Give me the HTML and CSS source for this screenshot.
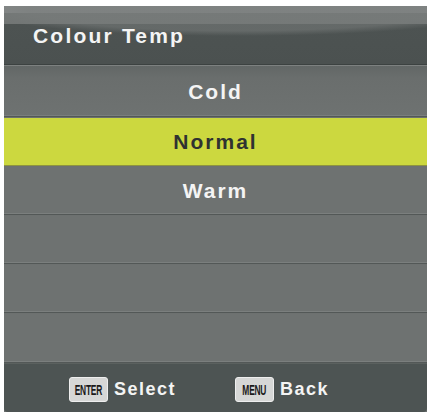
FILE: index.html
```html
<!DOCTYPE html>
<html>
<head>
<meta charset="utf-8">
<link rel="stylesheet" href="styles.css">
</head>
<body>
<div class="screen">
  <div class="header"><span class="title">Colour Temp</span></div>
  <div class="list">
    <div class="row first">Cold</div>
    <div class="row selected">Normal</div>
    <div class="row">Warm</div>
    <div class="row"></div>
    <div class="row"></div>
    <div class="row"></div>
  </div>
  <div class="footer">
    <div class="hint"><span class="key"><span class="keytext">ENTER</span></span><span class="label">Select</span></div>
    <div class="hint"><span class="key"><span class="keytext">MENU</span></span><span class="label">Back</span></div>
  </div>
</div>
</body>
</html>
```
FILE: styles.css
```css
html, body {
  margin: 0;
  padding: 0;
  background: #ffffff;
}
body {
  padding: 6px 4px 0 4px;
  font-family: "Liberation Sans", Arial, sans-serif;
}
.screen {
  width: 423px;
  display: flex;
  flex-direction: column;
  background: #6d7170;
}
.header {
  position: relative;
  height: 58px;
  display: flex;
  align-items: center;
  padding-left: 29px;
  background:
    radial-gradient(ellipse 260px 26px at 55% 4px, rgba(120,124,123,0.55) 0, rgba(120,124,123,0.55) 80%, rgba(120,124,123,0) 100%),
    linear-gradient(to bottom, #868989 0, #868989 7px, #727675 7px, #727675 18px, #4d5352 18px, #4b5150 100%);
  border-bottom: 1px solid #3c4241;
  box-shadow: 0 1px 0 #7d8180;
  margin-bottom: 1px;
}
.title {
  color: #f4f4f4;
  font-weight: bold;
  font-size: 21px;
  letter-spacing: 2.2px;
  margin-top: 1px;
}
.list {
  display: flex;
  flex-direction: column;
}
.row {
  height: 47px;
  display: flex;
  align-items: center;
  justify-content: center;
  color: #f4f4f4;
  font-weight: bold;
  font-size: 21px;
  letter-spacing: 2px;
  background: #6e7271;
  border-bottom: 1px solid #535857;
  box-shadow: inset 0 -1px 0 #7b7f7e;
  margin-bottom: 1px;
}
.row.first {
  background: linear-gradient(to bottom, #626766 0, #6a6e6d 12px, #6e7271 100%);
  padding-top: 2px;
  height: 48px;
}
.row.selected {
  background: #ccd83f;
  color: #2f3231;
  box-shadow: none;
  border-bottom: 1px solid #8e9440;
}
.row:last-child {
  margin-bottom: 0;
  height: 48px;
}
.footer {
  height: 46px;
  padding-top: 2px;
  background: #4d5453;
  border-top: 1px solid #5b615f;
  border-radius: 0 0 4px 4px;
  display: flex;
  align-items: center;
  padding-left: 65px;
  gap: 59px;
}
.hint {
  display: flex;
  align-items: center;
  gap: 6px;
}
.key {
  width: 37px;
  height: 23px;
  background: #d6d7d6;
  border: 1px solid #eeeeee;
  border-radius: 3px;
  display: flex;
  align-items: center;
  justify-content: center;
  overflow: hidden;
}
.keytext {
  display: inline-block;
  font-family: "Liberation Sans", Arial, sans-serif;
  font-size: 15px;
  font-weight: bold;
  color: #1a1a1a;
  transform: scaleX(0.56);
  letter-spacing: -0.4px;
}
.label {
  color: #f4f4f4;
  font-weight: bold;
  font-size: 18px;
  letter-spacing: 1.5px;
}
```
